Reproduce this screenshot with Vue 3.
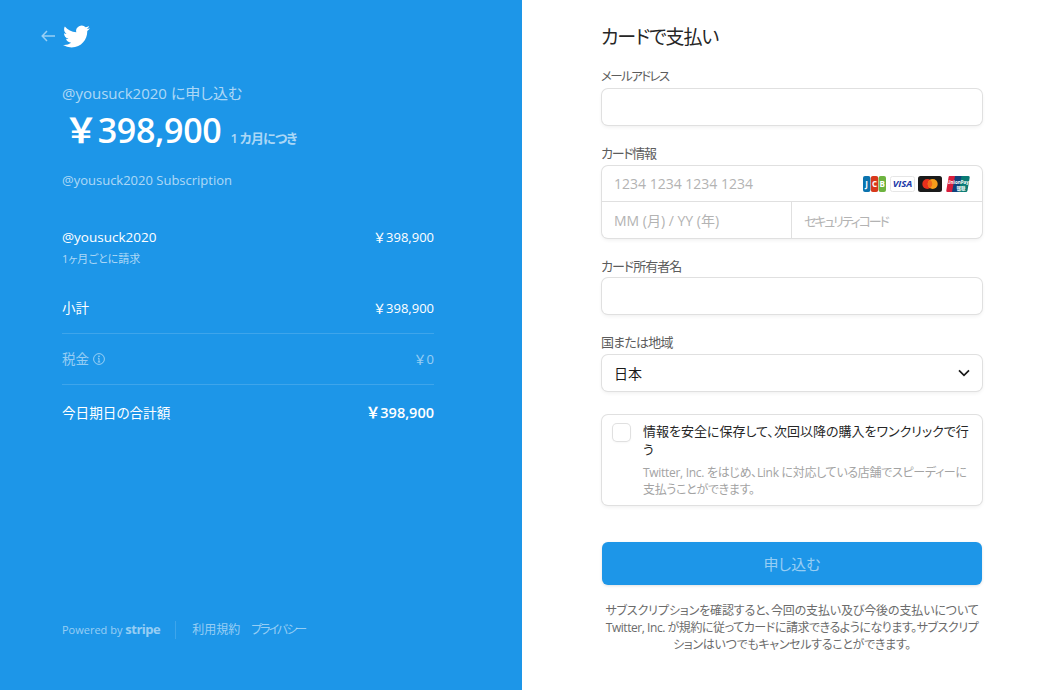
<script setup>
const lines = [
  { name: '小計', amount: '\uFFE5398,900' },
]
</script>

<template>
  <div class="page">
    <aside class="left">
      <div class="brand">
        <svg class="arrow" viewBox="0 0 14 12" width="14" height="12" fill="none" stroke="currentColor" stroke-width="1.5">
          <path d="M14 6H1.2M6 1 1.2 6 6 11" />
        </svg>
        <svg class="bird" viewBox="0 0 24 24" width="27" height="27" fill="#fff">
          <path d="M23.953 4.57a10 10 0 01-2.825.775 4.958 4.958 0 002.163-2.723c-.951.555-2.005.959-3.127 1.184a4.92 4.92 0 00-8.384 4.482C7.69 8.095 4.067 6.13 1.64 3.162a4.822 4.822 0 00-.666 2.475c0 1.71.87 3.213 2.188 4.096a4.904 4.904 0 01-2.228-.616v.06a4.923 4.923 0 003.946 4.827 4.996 4.996 0 01-2.212.085 4.936 4.936 0 004.604 3.417 9.867 9.867 0 01-6.102 2.105c-.39 0-.779-.023-1.17-.067a13.995 13.995 0 007.557 2.209c9.053 0 13.998-7.496 13.998-13.985 0-.21 0-.42-.015-.63A9.935 9.935 0 0024 4.59z" />
        </svg>
      </div>
      <div class="summary">
        <div class="sub-title">@yousuck2020 に申し込む</div>
        <div class="price-row">
          <span class="price">&#xFFE5;398,900</span>
          <span class="per">1 カ月につき</span>
        </div>
        <div class="desc">@yousuck2020 Subscription</div>
        <div class="item">
          <div class="row">
            <span>@yousuck2020</span><span class="amt">&#xFFE5;398,900</span>
          </div>
          <div class="note">1ヶ月ごとに請求</div>
        </div>
        <div v-for="l in lines" :key="l.name" class="row subtotal">
          <span>{{ l.name }}</span><span class="amt">{{ l.amount }}</span>
        </div>
        <div class="row tax">
          <span class="tax-label">税金
            <svg viewBox="0 0 12 12" width="12" height="12" fill="none" stroke="currentColor">
              <circle cx="6" cy="6" r="5.4" />
              <path d="M6 5.2v3.6M4.8 9h2.4M4.9 5.2H6" />
              <circle cx="6" cy="3.2" r=".4" />
            </svg>
          </span>
          <span class="amt">&#xFFE5;0</span>
        </div>
        <div class="row total">
          <span>今日期日の合計額</span><span class="total-amt">&#xFFE5;398,900</span>
        </div>
      </div>
      <footer class="foot">
        <span class="powered">Powered by <b>stripe</b></span>
        <span class="sep"></span>
        <span class="link">利用規約</span>
        <span class="link tight">プライバシー</span>
      </footer>
    </aside>

    <main class="right">
      <h1>カードで支払い</h1>
      <label class="l-mail">メールアドレス</label>
      <div class="box input"></div>

      <label class="l-card">カード情報</label>
      <div class="box card">
        <div class="card-top">
          <span class="ph">1234 1234 1234 1234</span>
          <span class="brands">
            <svg viewBox="0 0 23 16" width="23" height="16">
              <rect x="0" width="7.4" height="16" rx="2" fill="#0b73ae" />
              <rect x="7.8" width="7.4" height="16" rx="2" fill="#d8391c" />
              <rect x="15.6" width="7.4" height="16" rx="2" fill="#6db33f" />
              <text x="3.700" y="11" text-anchor="middle" class="jcb">J</text>
              <text x="11.500" y="11" text-anchor="middle" class="jcb">C</text>
              <text x="19.300" y="11" text-anchor="middle" class="jcb">B</text>
            </svg>
            <svg viewBox="0 0 25 16" width="25" height="16">
              <rect x=".5" y=".5" width="24" height="15" rx="2" fill="#fff" stroke="#e6e6e6" />
              <text x="12.500" y="11.200" text-anchor="middle" class="visa">VISA</text>
            </svg>
            <svg viewBox="0 0 24 16" width="24" height="16">
              <rect width="24" height="16" rx="2.500" fill="#1a1a1a" />
              <circle cx="9.300" cy="8" r="5" fill="#e8301c" />
              <circle cx="14.700" cy="8" r="5" fill="#f79e1b" />
              <path d="M12 3.800a5 5 0 010 8.400 5 5 0 010-8.400z" fill="#f26a1b" />
            </svg>
            <svg viewBox="0 0 24 16" width="24" height="16">
              <path d="M3.500 0H11L8 16H1.500Q0 16 .3 14.500L2.600 1Q2.800 0 3.500 0z" fill="#d81e3c" />
              <path d="M9 0h8L14 16H6z" fill="#11437c" />
              <path d="M15.500 0h7Q24 0 23.700 1.500L21.500 14.500Q21.200 16 20 16h-7.500z" fill="#0a7b74" />
              <text x="12" y="8" text-anchor="middle" class="up">UnionPay</text>
              <text x="15" y="13.500" text-anchor="middle" class="up2">银联</text>
            </svg>
          </span>
        </div>
        <div class="card-bottom">
          <span class="ph cell">MM (月) / YY (年)</span>
          <span class="ph cell cell-r tight-more">セキュリティコード</span>
        </div>
      </div>

      <label class="l-name">カード所有者名</label>
      <div class="box input name-box"></div>

      <label class="l-country">国または地域</label>
      <div class="box input select">
        <span>日本</span>
        <svg viewBox="0 0 12 8" width="12" height="8" fill="none" stroke="#1a1a1a" stroke-width="1.700">
          <path d="M1 1.300l5 5 5-5" />
        </svg>
      </div>

      <div class="box save">
        <span class="check"></span>
        <div class="save-text">
          <div class="save-title">情報を安全に保存して、次回以降の購入をワンクリックで行う</div>
          <div class="save-note">Twitter, Inc. をはじめ、Link に対応している店舗でスピーディーに支払うことができます。</div>
        </div>
      </div>

      <button type="button" class="pay">申し込む</button>
      <p class="legal">
        <span class="line-a">サブスクリプションを確認すると、今回の支払い及び今後の支払いについて</span>
        <span class="line-b">Twitter, Inc. が規約に従ってカードに請求できるようになります。サブスクリプ</span>
        <span class="line-c">ションはいつでもキャンセルすることができます。</span>
      </p>
    </main>
  </div>
</template>

<style>
html, body { margin: 0; background: #fff; }
</style>

<style scoped>
.page {
  display: flex;
  height: 690px;
  overflow: hidden;
  font-family: "Open Sans", "Noto Sans CJK JP", sans-serif;
  font-feature-settings: "palt";
  color: #1a1a1a;
}
.left {
  width: 522px;
  box-sizing: border-box;
  background: #1d96e8;
  color: #fff;
  padding: 25px 88px 0 41px;
  display: flex;
  flex-direction: column;
}
.brand { display: flex; align-items: center; gap: 8px; height: 22px; }
.arrow { color: rgba(255,255,255,.55); }
.bird { flex: none; }
.summary { padding: 36px 0 0 21px; }
.sub-title { font-size: 15px; line-height: 20px; color: rgba(255,255,255,.65); }
.price-row { display: flex; align-items: baseline; margin-top: 4px; height: 46px; }
.price { font-size: 34px; font-weight: 600; line-height: 46px; margin-left: 2px; letter-spacing: -.3px; font-feature-settings: normal; }
.per { font-size: 13px; font-weight: 600; letter-spacing: -.8px; color: rgba(255,255,255,.65); margin-left: 9px; }
.desc { margin-top: 18px; font-size: 13px; line-height: 18px; color: rgba(255,255,255,.65); }
.row { display: flex; justify-content: space-between; align-items: center; font-size: 13.5px; line-height: 20px; }
.amt { font-size: 13px; font-feature-settings: normal; }
.item { margin-top: 38px; }
.note { font-size: 11px; line-height: 16px; margin-top: 4px; color: rgba(255,255,255,.65); }
.subtotal { margin-top: 31px; padding-bottom: 15px; border-bottom: 1px solid rgba(255,255,255,.15); }
.tax { padding: 15px 0; border-bottom: 1px solid rgba(255,255,255,.15); color: rgba(255,255,255,.55); }
.tax-label { display: flex; align-items: center; gap: 4px; }
.total { margin-top: 18px; }
.total span:first-child { font-size: 13.6px; font-weight: 400; }
.total-amt { font-size: 14.5px; font-weight: 600; font-feature-settings: normal; }
.foot {
  margin-top: auto;
  margin-bottom: 51px;
  margin-left: 21px;
  display: flex;
  align-items: center;
  gap: 11px;
  font-size: 12px;
  line-height: 18px;
  color: rgba(255,255,255,.55);
}
.powered { font-size: 11px; }
.powered b { font-size: 13px; font-weight: 700; letter-spacing: -.5px; }
.sep { width: 1px; height: 18px; background: rgba(255,255,255,.15); margin: 0 5px 0 4px; }
.tight { letter-spacing: -2px; }

.right {
  width: 382px;
  margin-left: 79px;
  padding-top: 25px;
  box-sizing: border-box;
}
h1 { margin: 0; font-size: 19px; letter-spacing: -1.1px; font-weight: 400; line-height: 24px; color: #262626; }
label { display: block; margin-top: 20px; font-size: 13px; line-height: 16px; color: #5c5c5c; }
.l-mail { margin-top: 20px; margin-bottom: -1px; font-size: 12.5px; letter-spacing: -1.600px; }
.l-card { letter-spacing: -1.300px; }
.l-name { letter-spacing: -1px; }
.l-country { letter-spacing: -.8px; }
.box {
  box-sizing: border-box;
  margin-top: 5px;
  background: #fff;
  border-radius: 6px;
  box-shadow: 0 0 0 1px #e0e0e0, 0 2px 4px rgba(0,0,0,.07);
  margin-left: 1px;
  width: 380px;
}
.name-box { margin-top: 4px; }
.input { height: 36px; }
.card { height: 72px; }
.card-top {
  height: 36px;
  display: flex;
  align-items: center;
  justify-content: space-between;
  padding: 0 12px;
  border-bottom: 1px solid #e0e0e0;
  box-sizing: border-box;
}
.brands { display: flex; gap: 3.700px; height: 16px; }
.jcb { font: 700 8px "Open Sans", sans-serif; fill: #fff; }
.visa { font: italic 700 9.500px "Open Sans", sans-serif; fill: #1a38a8; }
.up { font: 700 4.500px "Open Sans", sans-serif; fill: #fff; }
.up2 { font: 700 4.500px "Noto Sans CJK SC", sans-serif; fill: #fff; }
.card-bottom { display: flex; height: 36px; }
.ph { font-size: 14px; color: #b3b3b3; }
.cell { width: 189px; box-sizing: border-box; display: flex; align-items: center; padding-left: 12px; }
.cell-r { flex: 1; border-left: 1px solid #e0e0e0; }
.tight-more { font-size: 13px; letter-spacing: -2.100px; }
.select {
  display: flex;
  align-items: center;
  justify-content: space-between;
  padding: 0 12px;
  font-size: 14px;
  color: #1a1a1a;
}
.save {
  display: flex;
  margin-top: 24px;
  height: 90px;
  padding: 7px 12px 0 11px;
  gap: 13px;
}
.check {
  flex: none;
  width: 17px;
  height: 17px;
  border-radius: 4px;
  box-shadow: 0 0 0 1px #e0e0e0, 0 1px 3px rgba(0,0,0,.07);
  margin-top: 2px;
}
.save-title { font-size: 13px; line-height: 18px; color: #262626; }
.save-note { font-size: 12px; line-height: 17px; color: #a3a3a3; margin-top: 6px; letter-spacing: -.3px; }
.pay {
  display: block;
  width: 380px;
  height: 43px;
  margin: 37px 0 0 1px;
  border: 0;
  border-radius: 6px;
  background: #1d96e8;
  box-shadow: 0 1px 3px rgba(0,0,0,.12);
  color: rgba(255,255,255,.55);
  font-family: inherit;
  font-feature-settings: inherit;
  font-size: 15px;
}
.legal {
  margin: 17px 0 0;
  font-size: 12px;
  line-height: 17px;
  text-align: center;
  color: #6b6b6b;
  white-space: nowrap;
}
.legal span { display: block; }
.line-a { letter-spacing: -.14px; }
.line-b { letter-spacing: -.45px; }
.line-c { letter-spacing: -.3px; }
</style>
